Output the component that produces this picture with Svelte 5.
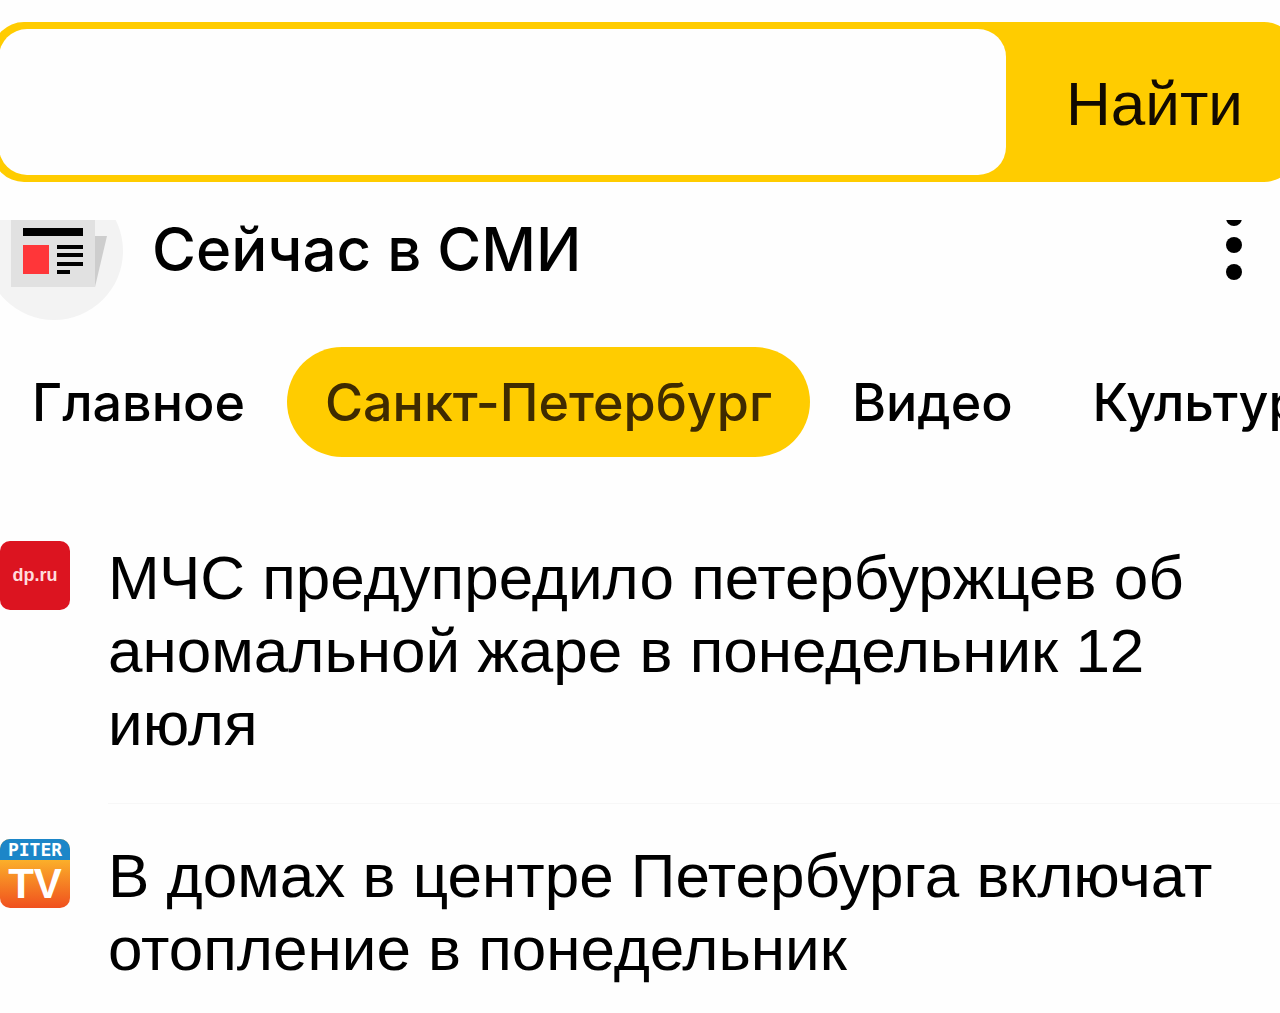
<script lang="ts">
  interface NewsItem {
    id: string
    source: string
    title: string
  }

  let query = $state('')
  let activeTab = $state('Санкт-Петербург')

  const tabs = ['Главное', 'Санкт-Петербург', 'Видео', 'Культура']

  const news: NewsItem[] = [
    { id: 'dp', source: 'dp.ru', title: 'МЧС предупредило петербуржцев об аномальной жаре в понедельник 12 июля' },
    { id: 'piter', source: 'Piter TV', title: 'В домах в центре Петербурга включат отопление в понедельник' }
  ]
</script>

<div class="page">
  <form class="search" onsubmit={(e) => e.preventDefault()}>
    <input class="search-input" type="text" aria-label="Поиск" bind:value={query} />
    <button class="search-btn" type="submit">Найти</button>
  </form>

  <main>
    <header class="widget-header">
      <!-- newspaper in a circle, scrolled under the search bar -->
      <svg class="widget-icon" viewBox="0 0 124 100" aria-hidden="true">
        <circle cx="54" cy="31" r="69" fill="#f3f3f3" />
        <path d="M94 16h13L95 67h-4z" fill="#cdcdcd" />
        <path d="M11 0h84v67H11z" fill="#e1e1e1" />
        <path d="M23 8h60v8H23z" fill="#000" />
        <path d="M23 25h26v29H23z" fill="#ff3639" />
        <path d="M57 25h26v4H57zM57 33h26v4H57zM57 42h26v4H57zM57 50h13v4H57z" fill="#000" />
      </svg>
      <h1>Сейчас в СМИ</h1>
      <button class="menu-btn" type="button" aria-label="Меню">
        <svg viewBox="0 0 16 60" aria-hidden="true">
          <circle cx="8" cy="-2" r="8" />
          <circle cx="8" cy="25" r="8" />
          <circle cx="8" cy="52" r="8" />
        </svg>
      </button>
    </header>

    <nav class="tabs">
      {#each tabs as tab (tab)}
        <button
          class="tab"
          class:active={tab === activeTab}
          type="button"
          onclick={() => (activeTab = tab)}
        >
          {tab}
        </button>
      {/each}
    </nav>

    <ul class="news">
      {#each news as item (item.id)}
        <li class="news-item">
          <span class="logo {item.id}" title={item.source}>
            {#if item.id === 'dp'}
              <span>dp.ru</span>
            {:else}
              <span class="piter-top">PITER</span>
              <span class="piter-tv">TV</span>
            {/if}
          </span>
          <a href="#{item.id}">{item.title}</a>
        </li>
      {/each}
    </ul>
  </main>
</div>

<style>
  :global(body) {
    margin: 0;
    background: #fefefe;
  }

  .page {
    overflow: hidden;
    padding-top: 22px;
    color: #000;
    font-family: 'Liberation Sans', Arial, sans-serif;
  }

  button {
    border: 0;
    padding: 0;
    background: none;
    color: inherit;
    font-family: inherit;
    cursor: pointer;
  }

  .search {
    display: flex;
    height: 160px;
    margin: 0 -16px 0 -8px;
    padding: 7px;
    box-sizing: border-box;
    border-radius: 32px;
    background: #ffcc00;
  }

  .search-input {
    flex: 1;
    min-width: 0;
    padding: 0 32px;
    border: 0;
    border-radius: 28px;
    outline: none;
    background: #fefefe;
    font-family: inherit;
    font-size: 62px;
  }

  .search-btn {
    padding: 2px 46px 0 60px;
    color: #120a00;
    font-size: 62px;
  }

  .widget-header {
    display: flex;
    align-items: flex-start;
    height: 100px;
    margin-top: 38px;
  }

  .widget-icon {
    width: 124px;
    height: 100px;
  }

  h1 {
    flex: 1;
    margin: 0 0 0 28px;
    font-family: Inter, sans-serif;
    font-size: 60px;
    font-weight: 500;
    line-height: 58px;
  }

  .menu-btn {
    display: flex;
    margin-right: 38px;
  }

  .menu-btn svg {
    width: 16px;
    height: 60px;
  }

  .tabs {
    display: flex;
    gap: 4px;
    margin: 27px 0 0 -6px;
  }

  .tab {
    flex: none;
    height: 110px;
    padding: 0 38px;
    border-radius: 55px;
    font-family: Inter, sans-serif;
    font-size: 52px;
    font-weight: 500;
  }

  .tab.active {
    background: #ffcc00;
    color: #3f2b00;
  }

  .news {
    margin: 84px 0 0;
    padding: 0;
    list-style: none;
  }

  .news-item {
    display: flex;
    align-items: flex-start;
    gap: 38px;
  }

  .news-item a {
    flex: 1;
    color: inherit;
    font-size: 62px;
    line-height: 73px;
    text-decoration: none;
  }

  .news-item + .news-item a {
    margin-top: 43px;
    padding-top: 35px;
    border-top: 1px solid #f7f7f7;
  }

  .news-item + .news-item .logo {
    margin-top: 79px;
  }

  .logo {
    display: flex;
    flex-direction: column;
    align-items: center;
    width: 70px;
    height: 69px;
    overflow: hidden;
    border-radius: 10px;
    color: #fff;
    font-weight: 700;
  }

  .dp {
    justify-content: center;
    background: #dc1420;
    color: #ffdcdc;
    font-size: 18px;
  }

  .piter {
    background: linear-gradient(#fbb02a 30%, #f0501e);
  }

  .piter-top {
    align-self: stretch;
    background: #1c86c8;
    font-family: 'DejaVu Sans Mono', monospace;
    font-size: 18px;
    line-height: 21px;
    text-align: center;
  }

  .piter-tv {
    font-size: 42px;
    line-height: 48px;
  }
</style>
